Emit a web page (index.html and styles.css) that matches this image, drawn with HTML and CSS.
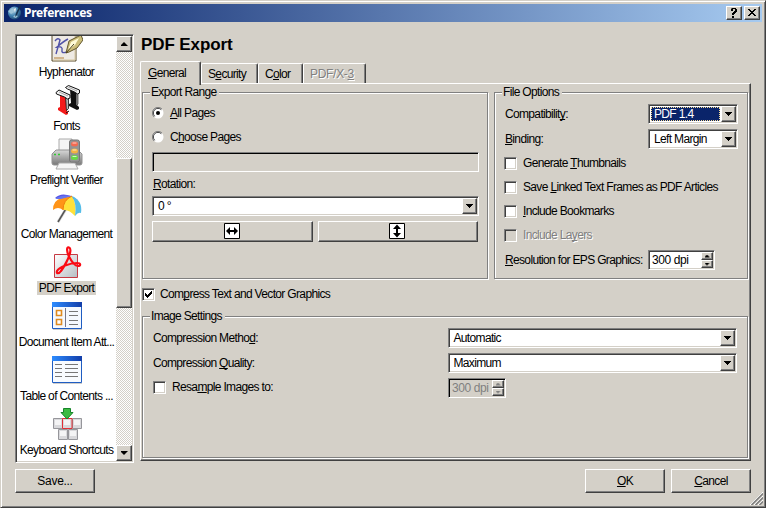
FILE: index.html
```html
<!DOCTYPE html>
<html lang="en">
<head>
<meta charset="utf-8">
<title>Preferences</title>
<link rel="stylesheet" href="styles.css">
</head>
<body>
<div class="window">
  <header class="titlebar">
    <svg class="app-icon" width="16" height="16" viewBox="0 0 16 16"><defs><radialGradient id="globe" cx=".35" cy=".3" r=".8"><stop offset="0" stop-color="#b9d3e2"/><stop offset=".5" stop-color="#4587b4"/><stop offset="1" stop-color="#153a66"/></radialGradient></defs><circle cx="7.5" cy="8" r="6.5" fill="url(#globe)"/><path d="M1 6l4-2 2 3-3 2zM6 12l3 1 2-2-3-1z" fill="#9cc3d8"/><path d="M13 0l1 1-4 9-2 2 1-4z" fill="#17324e"/><path d="M7 4l2-1-1 5z" fill="#f2f6f8"/></svg>
    <h1 class="caption">Preferences</h1>
    <button class="cap-btn"><svg width="12" height="10" viewBox="0 0 12 10"><path d="M3 0h5v1h1v3h-1v1h-1v1h-1v1h-2v-2h1v-1h1v-1h1v-2h-2v2h-2v-2h1zM4 8h2v2h-2z"/></svg></button>
    <button class="cap-btn"><svg width="12" height="10" viewBox="0 0 12 10"><path d="M2 1h2v1h1v1h2v-1h1v-1h2v1h-1v1h-1v1h-1v1h1v1h1v1h1v1h-2v-1h-1v-1h-2v1h-1v1h-2v-1h1v-1h1v-1h1v-1h-1v-1h-1v-1h-1z"/></svg></button>
  </header>

  <main class="main">
    <aside class="sidebar">
      <ul class="list">
        <li><svg width="32" height="32" viewBox="0 0 32 32"><path d="M1 0h24v31h-24z" fill="#eeeae4" stroke="#5b4d2c"/><path d="M2 30h22V1" fill="none" stroke="#d7c9a2"/><path d="M4 11q3-4 5-1l-4 14M17 9q-4 2-11 8q6-1 5 3t5 2" fill="none" stroke="#5153a8" stroke-width="1.400"/><path d="M3 28h10" stroke="#c7a373" stroke-width="1.500"/><path d="M15 23l3-12 12-6 2 5-6 8-8 4z" fill="#cbbd78" stroke="#62572f"/><path d="M17 20l3-8 8-4-4 7z" fill="#fffbd7"/><path d="M15 23l8-9" stroke="#49401e"/></svg><span>Hyphenator</span></li>
        <li><svg width="32" height="32" viewBox="0 0 32 32"><path d="M19 5l6 3v12l3 3v2l-2 1-8-4v-2l2-1z" fill="#111"/><path d="M25 8l2 1v11l-2 2z" fill="#9a9a9a" stroke="#111" stroke-width=".6"/><path d="M14.500 3.500l3-2 11 4.500v3l-2 1-3-2-7-3z" fill="#f2f2f2" stroke="#111"/><path d="M17 3l9 4" stroke="#aaa"/><path d="M9 10l6 3v12l2 3v2l-2 1-8-5v-2l2-1z" fill="#f31b1b"/><path d="M14.500 12.500l3 1v11l-2 2z" fill="#b5b5b5" stroke="#111" stroke-width=".8"/><path d="M15 29l3-2" stroke="#111"/><path d="M5 8.500l3-2.500 11 5v3l-2.500 1-3-2-8-3z" fill="#f2f2f2" stroke="#111"/><path d="M8 8l9 4" stroke="#aaa"/></svg><span>Fonts</span></li>
        <li><svg width="34" height="32" viewBox="0 0 34 32"><defs><linearGradient id="pr" x2="0" y2="1"><stop offset="0" stop-color="#d8d8d8"/><stop offset="1" stop-color="#777"/></linearGradient></defs><path d="M9 1h13v14H9z" fill="#f5f5f5" stroke="#aaa"/><path d="M6 12h22l4 4v9q0 2-2 2H4q-2 0-2-2v-9z" fill="url(#pr)" stroke="#929292"/><path d="M9 25h16l3 6H6z" fill="#f5f5f5" stroke="#aaa"/><rect x="19.500" y="2" width="10" height="22" rx="2" fill="#949494" stroke="#777"/><ellipse cx="24.500" cy="6" rx="3.500" ry="2.500" fill="#f46a50"/><ellipse cx="24.500" cy="13" rx="3.500" ry="2.500" fill="#f4b340"/><ellipse cx="24.500" cy="19.500" rx="3.500" ry="2.500" fill="#66db45"/><path d="M22.500 5h4M22.500 12h4M22.500 18.500h4" stroke="#fff" opacity=".7"/><path d="M4 16.500h2M8 16.500h2" stroke="#34c934" stroke-width="1.500"/></svg><span>Preflight Verifier</span></li>
        <li><svg width="32" height="32" viewBox="0 0 32 32"><path d="M15 17L7 30" stroke="#ddd" stroke-width="3"/><path d="M16 15L7 30" stroke="#555" stroke-width="1.500"/><path d="M4 6Q10 0 20 4L27 8 13 6z" fill="#5754e7"/><path d="M2 18Q2 8 11 6l10-2-9 14Q7 14 2 18z" fill="#ff9418"/><path d="M21 4q-9 4-9 14 6-1 12 6 2-11-3-20z" fill="#ffe13a"/><path d="M4 7Q10 2 21 4L10 7z" fill="#6675ed"/><path d="M21 4q11 5 9 17-3-1-6 3 2-12-3-20z" fill="#55bde8"/><path d="M21 4q-9 4-9 14" fill="none" stroke="#ef7c0b"/></svg><span>Color Management</span></li>
        <li class="selected"><svg width="32" height="32" viewBox="0 0 32 32"><defs><linearGradient id="pd" x2="1" y2="1"><stop offset="0" stop-color="#fff"/><stop offset="1" stop-color="#b6bec3"/></linearGradient></defs><path d="M3.500 8.500h23v23h-23z" fill="url(#pd)" stroke="#c63a43"/><path d="M18 1.500c-3-1-2 5 0 9s5 9 9 9.500c3 0 3-3-1-3-7 0-18 4-20 8-1 3 2 3 4 0 3-4 8-13 9-18 .7-3 .5-5-1-5.500z" fill="none" stroke="#fb0b14" stroke-width="2.200"/></svg><span>PDF Export</span></li>
        <li><svg width="32" height="32" viewBox="0 0 32 32"><defs><linearGradient id="bl"><stop offset="0" stop-color="#2d8cff"/><stop offset="1" stop-color="#123da9"/></linearGradient></defs><path d="M2 4h29v26H2z" fill="#ccc"/><path d="M1.500 2.500h29v26h-29z" fill="#f5f9ff" stroke="#1f5dc2"/><path d="M1 2h30v5H1z" fill="url(#bl)"/><path d="M5.500 10.500h5v5h-5zM5.500 19.500h5v5h-5z" fill="#fff" stroke="#df8b20" stroke-width="1.600"/><path d="M14.500 8v19" stroke="#778"/><path d="M18 11.500h9M18 15.500h9M18 20.500h9M18 24.500h9" stroke="#777"/></svg><span>Document Item Att...</span></li>
        <li><svg width="32" height="32" viewBox="0 0 32 32"><path d="M2 4h29v26H2z" fill="#ccc"/><path d="M1.500 2.500h29v26h-29z" fill="#f8fbff" stroke="#1f5dc2"/><path d="M1 2h30v5H1z" fill="url(#bl)"/><path d="M4 10.500h7M14 10.500h13M4 14.500h7M14 14.500h13M4 18.500h7M14 18.500h13M4 22.500h7M14 22.500h13" stroke="#777"/></svg><span>Table of Contents ...</span></li>
        <li><svg width="32" height="32" viewBox="0 0 32 32"><g fill="#d9d9dc" stroke="#96969b"><path d="M2.500 10.500h9v10h-9zM21.500 10.500h9v10h-9zM7.500 21.500h9v10h-9zM17.500 21.500h9v10h-9z"/><path d="M11.500 10.500h9.500v10h-9.500z" stroke="#e12f36"/></g><path d="M4 12h6v5H4zM13 12h6v5h-6zM23 12h6v5h-6zM9 23h6v5H9zM19 23h6v5h-6z" fill="#f4f4f5"/><path d="M12.500.5h7v4h2.500l-6 6.500-6-6.500h2.500z" fill="#3dbb42" stroke="#17852a"/></svg><span>Keyboard Shortcuts</span></li>
      </ul>
      <div class="scrollbar">
        <button class="sb-btn"><i class="up"></i></button>
        <div class="thumb"></div>
        <button class="sb-btn"><i class="down"></i></button>
      </div>
    </aside>

    <section class="content">
      <h2 class="heading">PDF Export</h2>
      <nav class="tabs">
        <span class="tab tab-general active"><u>G</u>eneral</span>
        <span class="tab tab-security">S<u>e</u>curity</span>
        <span class="tab tab-color">C<u>o</u>lor</span>
        <span class="tab tab-pdfx disabled">PDF/X-<u>3</u></span>
      </nav>
      <div class="panel">
        <div class="columns">
          <div class="group export">
            <h3>Export Range</h3>
            <label class="radio"><svg width="12" height="12" viewBox="0 0 12 12"><circle cx="6" cy="6" r="5.500" fill="#fff"/><path d="M2 10A5.500 5.500 0 0 1 10 2" fill="none" stroke="#808080"/><path d="M2.700 9.300A4.600 4.600 0 0 1 9.300 2.700" fill="none" stroke="#404040"/><circle cx="6" cy="6" r="2"/></svg><span><u>A</u>ll Pages</span></label>
            <label class="radio"><svg width="12" height="12" viewBox="0 0 12 12"><circle cx="6" cy="6" r="5.500" fill="#fff"/><path d="M2 10A5.500 5.500 0 0 1 10 2" fill="none" stroke="#808080"/><path d="M2.700 9.300A4.600 4.600 0 0 1 9.300 2.700" fill="none" stroke="#404040"/></svg><span>C<u>h</u>oose Pages</span></label>
            <div class="field off"></div>
            <div class="rotation"><u>R</u>otation:</div>
            <div class="field combo"><span>0 °</span><button class="drop"><i class="down"></i></button></div>
            <div class="flips">
              <button class="btn"><svg width="16" height="16" viewBox="0 0 16 16"><path d="M.5.5h15v15H.5z" fill="#fff" stroke="#000"/><path d="M2 8l4-4v3h4V4l4 4-4 4V9H6v3z"/></svg></button>
              <button class="btn"><svg width="16" height="16" viewBox="0 0 16 16"><path d="M.5.5h15v15H.5z" fill="#fff" stroke="#000"/><path d="M8 1.500l4 4.500H9v4h3l-4 4.500L4 10h3V6H4z"/></svg></button>
            </div>
          </div>

          <div class="group options">
            <h3>File Options</h3>
            <div class="row"><span>Compatibilit<u>y</u>:</span><div class="field combo"><span class="focus">PDF 1.4</span><button class="drop"><i class="down"></i></button></div></div>
            <div class="row"><span><u>B</u>inding:</span><div class="field combo"><span>Left Margin</span><button class="drop"><i class="down"></i></button></div></div>
            <div class="checks">
              <label class="check"><b class="box"></b><span>Generate <u>T</u>humbnails</span></label>
              <label class="check"><b class="box"></b><span>Save <u>L</u>inked Text Frames as PDF Articles</span></label>
              <label class="check"><b class="box"></b><span><u>I</u>nclude Bookmarks</span></label>
              <label class="check disabled"><b class="box"></b><span>Include La<u>y</u>ers</span></label>
            </div>
            <div class="row resolution"><span><u>R</u>esolution for EPS Graphics:</span><div class="field spin"><span>300 dpi</span><div class="steps"><button><i class="up"></i></button><button><i class="down"></i></button></div></div></div>
          </div>
        </div>

        <label class="check compress"><b class="box"><svg width="7" height="7" viewBox="0 0 7 7"><path d="M0 2h1v1h1v1h1v-1h1v-1h1v-1h1v-1h1v3h-1v1h-1v1h-1v1h-1v1h-1v-1h-1v-1h-1z"/></svg></b><span>Com<u>p</u>ress Text and Vector Graphics</span></label>

        <div class="group images">
          <h3>Image Settings</h3>
          <div class="row"><span>Compression Metho<u>d</u>:</span><div class="field combo"><span>Automatic</span><button class="drop"><i class="down"></i></button></div></div>
          <div class="row"><span>Compression <u>Q</u>uality:</span><div class="field combo"><span>Maximum</span><button class="drop"><i class="down"></i></button></div></div>
          <div class="row"><label class="check resample"><b class="box"></b><span>Resa<u>m</u>ple Images to:</span></label><div class="field spin off"><span>300 dpi</span><div class="steps"><button><i class="up"></i></button><button><i class="down"></i></button></div></div></div>
        </div>
      </div>
    </section>
  </main>

  <footer class="footer">
    <button class="btn save">Save...</button>
    <button class="btn"><u>O</u>K</button>
    <button class="btn"><u>C</u>ancel</button>
  </footer>
  <svg class="grip" width="13" height="13" viewBox="0 0 13 13"><path d="M0 13L13 0M4 13L13 4M8 13L13 8" stroke="#fff" fill="none"/><path d="M1.500 13L13 1.500M5.500 13L13 5.500M9.500 13L13 9.500" stroke="#808080" stroke-width="1.600" fill="none"/></svg>
</div>
</body>
</html>
```
FILE: styles.css
```css
* { box-sizing: border-box; margin: 0; padding: 0; }
body {
  width: 766px;
  height: 508px;
  overflow: hidden;
  background: #d4d0c8;
  color: #000;
  font: 12px/14px "Liberation Sans", Arial, sans-serif;
  letter-spacing: -0.66px;
  white-space: nowrap;
}
button { font: inherit; letter-spacing: inherit; color: inherit; }
u { text-decoration: underline; text-underline-offset: 1px; text-decoration-thickness: 1px; text-decoration-skip-ink: none; }
svg { display: block; flex: none; }

.window {
  position: relative;
  width: 766px;
  height: 508px;
  padding: 3px;
  border: 1px solid;
  border-color: #d4d0c8 #404040 #404040 #d4d0c8;
  box-shadow: inset 1px 1px #fff, inset -1px -1px #808080;
}
.titlebar {
  display: flex;
  align-items: center;
  height: 18px;
  padding: 0 2px 0 3px;
  background: linear-gradient(90deg, #0a246a, #a6caf0);
}
.caption {
  flex: 1;
  margin-left: 1px;
  color: #fff;
  font: bold 12px/18px "Noto Sans", sans-serif;
  letter-spacing: -0.3px;
}
.cap-btn, .btn, .sb-btn, .thumb, .drop, .steps button {
  display: flex;
  align-items: center;
  justify-content: center;
  background: #d4d0c8;
  border: 1px solid;
  border-color: #fff #404040 #404040 #fff;
  box-shadow: inset -1px -1px #808080;
}
.cap-btn { width: 16px; height: 14px; padding: 0 1px 1px 0; }
.cap-btn + .cap-btn { margin-left: 2px; }

.main { display: flex; gap: 6px; height: 429px; margin: 12px 11px 6px; }

.sidebar, .field {
  display: flex;
  padding: 1px;
  background: #fff;
  border: 1px solid;
  border-color: #808080 #fff #fff #808080;
  box-shadow: inset 1px 1px #404040, inset -1px -1px #d4d0c8;
}
.sidebar { width: 119px; }
.list {
  display: flex;
  flex-direction: column;
  width: 99px;
  overflow: hidden;
  list-style: none;
}
.list li { display: flex; flex: none; flex-direction: column; align-items: center; height: 54px; }
.list li:first-child { margin-top: -6px; }
.list svg { margin-bottom: 3px; }
.list span { height: 14px; padding: 0 2px; }
.list .selected span { background: #d4d0c8; }
.scrollbar {
  display: flex;
  flex-direction: column;
  justify-content: space-between;
  width: 16px;
  background: repeating-conic-gradient(#fff 0 25%, #d4d0c8 0 50%) 0 0 / 2px 2px;
}
.sb-btn { width: 16px; height: 16px; }
.thumb { height: 150px; margin-bottom: 31px; }

i { display: block; width: 7px; height: 4px; background: #000; }
i.up { clip-path: polygon(3px 0, 4px 0, 4px 1px, 5px 1px, 5px 2px, 6px 2px, 6px 3px, 7px 3px, 7px 4px, 0 4px, 0 3px, 1px 3px, 1px 2px, 2px 2px, 2px 1px, 3px 1px); }
i.down { clip-path: polygon(0 0, 7px 0, 7px 1px, 6px 1px, 6px 2px, 5px 2px, 5px 3px, 4px 3px, 4px 4px, 3px 4px, 3px 3px, 2px 3px, 2px 2px, 1px 2px, 1px 1px, 0 1px); }

.content { width: 611px; }
.heading { height: 27px; padding-left: 1px; font-size: 17px; line-height: 22px; letter-spacing: -0.1px; }
.tabs { display: flex; align-items: flex-end; height: 22px; }
.tab {
  height: 20px;
  padding: 3px 0 0 6px;
  border: 1px solid;
  border-color: #fff #404040 transparent #fff;
  border-bottom: 0;
  border-radius: 2px 2px 0 0;
  box-shadow: inset -1px 0 #808080;
}
.tab-general { width: 61px; }
.tab-security { width: 57px; }
.tab-color { width: 45px; }
.tab-pdfx { width: 63px; letter-spacing: -0.3px; }
.tab.active { position: relative; height: 24px; margin-bottom: -2px; padding: 4px 0 0 7px; background: #d4d0c8; }
.disabled, .off { color: #808080; }
.disabled { text-shadow: 1px 1px #fff; }

.panel {
  height: 378px;
  padding: 8px 1px 0;
  border: 1px solid;
  border-color: #fff #404040 #404040 #fff;
  box-shadow: inset -1px -1px #808080;
}
.columns { display: flex; gap: 6px; }
.group {
  border: 1px solid #808080;
  box-shadow: 1px 1px #fff, inset 1px 1px #fff;
  padding: 0 9px;
}
.group h3 { width: max-content; margin: -8px 0 0 -2px; padding: 0 3px 0 1px; background: #d4d0c8; font: inherit; }
.export { width: 346px; height: 187px; }
.options { width: 254px; height: 187px; }
.images { width: 606px; height: 142px; margin-top: 13px; padding: 0 10px; }
.images h3 { margin-left: -3px; }

.radio { display: flex; align-items: center; gap: 6px; height: 24px; }
h3 + .radio { margin-top: 2px; }
.field { height: 20px; }
.field.off { background: #d4d0c8; box-shadow: inset 1px 1px #000, inset -1px -1px #d4d0c8; }
.export .field { width: 327px; }
.export .field.off { margin-top: 3px; }
.rotation { height: 24px; padding: 5px 0 0 1px; }
.combo > span { flex: 1; padding: 1px 0 0 4px; }
.combo > .focus { margin: 1px; padding: 0 0 0 3px; background: #0a246a; color: #fff; outline: 1px dotted #f5db95; outline-offset: -1px; }
.drop { width: 15px; height: 16px; }
.flips { display: flex; gap: 5px; margin-top: 5px; }
.flips .btn { width: 161px; height: 21px; padding: 0 1px 2px 0; }

.row { display: flex; align-items: center; justify-content: space-between; height: 20px; margin-top: 5px; }
.row > span { padding-left: 1px; }
.options .row .combo { width: 90px; }
.checks { margin-top: 2px; }
.check { display: flex; gap: 6px; height: 24px; padding-top: 5px; }
.box { display: flex; align-items: center; justify-content: center; flex: none; width: 13px; height: 13px; margin-top: 1px; background: #fff; border: 1px solid; border-color: #808080 #fff #fff #808080; box-shadow: inset 1px 1px #404040, inset -1px -1px #d4d0c8; }
.disabled .box { background: #d4d0c8; }
.row.resolution { justify-content: flex-start; margin-top: 3px; }
.resolution > span { width: 144px; }
.spin { width: 67px; }
.spin > span { flex: 1; padding: 1px 0 0 2px; letter-spacing: -0.4px; }
.steps { display: flex; flex-direction: column; }
.steps button { width: 12px; height: 8px; }
.steps i { width: 5px; height: 3px; }
.steps i.up { clip-path: polygon(2px 0, 3px 0, 3px 1px, 4px 1px, 4px 2px, 5px 2px, 5px 3px, 0 3px, 0 2px, 1px 2px, 1px 1px, 2px 1px); }
.steps i.down { clip-path: polygon(0 0, 5px 0, 5px 1px, 4px 1px, 4px 2px, 3px 2px, 3px 3px, 2px 3px, 2px 2px, 1px 2px, 1px 1px, 0 1px); }
.off .steps i { background: #808080; }
.compress { gap: 5px; height: 21px; margin-top: 3px; }
.images .row .combo { width: 290px; }
.images .row { justify-content: flex-start; }
.images .row > :first-child { width: 295px; padding-left: 0; }
.images .spin { width: 58px; }
.images .resample { height: 20px; padding-top: 2px; }
.resample .box { margin-top: 1px; }

.footer { display: flex; gap: 6px; margin: 0 11px; }
.footer .btn { width: 80px; height: 24px; }
.footer .save { margin-right: auto; letter-spacing: -0.3px; }
.grip { position: absolute; right: 2px; bottom: 2px; }
```
